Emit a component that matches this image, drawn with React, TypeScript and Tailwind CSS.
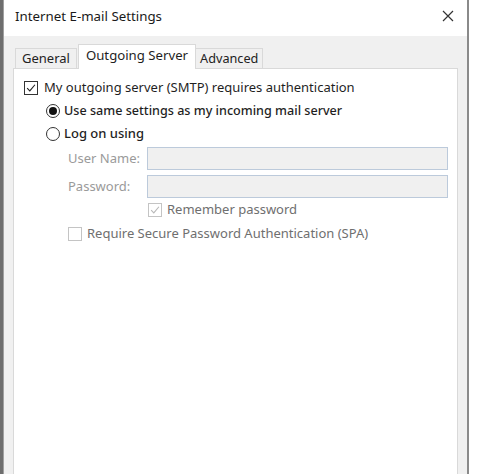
import React from "react";

function CheckMark({ color }: { color: string }) {
	return (
		<svg viewBox="0 0 14 14" className="w-full h-full" fill="none">
			<path d="M2.5 7.2 L5.6 10.3 L11.6 3.2" stroke={color} strokeWidth="1.3" />
		</svg>
	);
}

function CheckBox({ checked, disabled }: { checked?: boolean; disabled?: boolean }) {
	return (
		<span
			className={
				disabled
					? "w-[14px] h-[14px] border border-[#c4c4c4] bg-white shrink-0"
					: "w-[14px] h-[14px] border border-[#333333] bg-white shrink-0"
			}>
			{checked && <CheckMark color={disabled ? "#b8b8b8" : "#222222"} />}
		</span>
	);
}

function Radio({ checked }: { checked?: boolean }) {
	return (
		<span className="w-[14px] h-[14px] rounded-full border border-[#333333] bg-white shrink-0 flex items-center justify-center">
			{checked && <span className="w-[8px] h-[8px] rounded-full bg-[#111111]" />}
		</span>
	);
}

export default function App() {
	return (
		<div
			className="w-[484px] h-[474px] flex bg-white overflow-hidden text-[13px] text-[#1f1f1f]"
			style={{ fontFamily: '"Noto Sans", "Open Sans", sans-serif' }}>
			<div className="w-[4px] h-full bg-[#6e6e6e] border-r border-[#a0a0a0]" />

			<div className="w-[465px] h-full flex flex-col border-r-2 border-[#8a8a8a]">
				<div className="h-[36px] bg-white flex items-center justify-between pl-[11px] pr-[13px]">
					<span className="text-[13.3px] text-[#1a1a1a] -mt-[2px]">Internet E-mail Settings</span>
					<svg viewBox="0 0 12 12" className="w-[12px] h-[12px] -mt-[4px]" fill="none">
						<path d="M1 1 L11 11 M11 1 L1 11" stroke="#333333" strokeWidth="1.2" />
					</svg>
				</div>

				<div className="flex-1 bg-[#f0f0f0] flex flex-col pl-[9px] pr-[9px] pt-[8px]">
					<div className="flex items-end h-[24px] pl-[2px] relative z-10">
						<div className="h-[20px] px-[6px] flex items-center border border-b-0 border-[#d9d9d9] bg-[#f0f0f0] text-[#222222]">
							General
						</div>
						<div className="h-[25px] ml-[1px] px-[7px] flex items-center border border-b-0 border-[#d9d9d9] bg-white -mb-[1px] pb-[2px] text-[13.2px]">
							Outgoing Server
						</div>
						<div className="h-[20px] px-[4px] flex items-center border border-b-0 border-l-0 border-[#d9d9d9] bg-[#f0f0f0] text-[12.7px] text-[#222222]">
							Advanced
						</div>
					</div>

					<div className="flex-1 bg-white border border-[#d9d9d9] border-b-0 flex flex-col pl-[10px] pr-[9px] pt-[11px]">
						<label className="flex items-center gap-[6px] h-[16px]">
							<CheckBox checked />
							<span>My outgoing server (SMTP) requires authentication</span>
						</label>

						<label className="flex items-center gap-[4px] h-[16px] mt-[7px] ml-[22px] font-medium text-[12.6px]">
							<Radio checked />
							<span>Use same settings as my incoming mail server</span>
						</label>

						<label className="flex items-center gap-[4px] h-[16px] mt-[7px] ml-[22px] font-medium">
							<Radio />
							<span>Log on using</span>
						</label>

						<div className="flex items-center mt-[5px] ml-[44px]">
							<span className="w-[79px] text-[#9a9a9a]">User Name:</span>
							<div className="flex-1 h-[23px] bg-[#f0f0f0] border border-[#bccadb]" />
						</div>
						<div className="flex items-center mt-[5px] ml-[44px]">
							<span className="w-[79px] text-[#9a9a9a]">Password:</span>
							<div className="flex-1 h-[23px] bg-[#f0f0f0] border border-[#bccadb]" />
						</div>

						<label className="flex items-center gap-[5px] h-[16px] mt-[4px] ml-[124px] text-[#6f6f6f]">
							<CheckBox checked disabled />
							<span>Remember password</span>
						</label>

						<label className="flex items-center gap-[5px] h-[16px] mt-[8px] ml-[44px] text-[#6f6f6f]">
							<CheckBox disabled />
							<span>Require Secure Password Authentication (SPA)</span>
						</label>
					</div>
				</div>
			</div>
		</div>
	);
}
